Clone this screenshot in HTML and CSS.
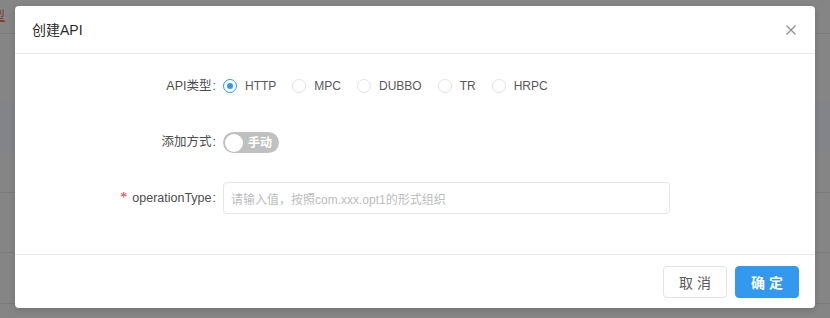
FILE: index.html
```html
<!DOCTYPE html>
<html lang="zh-CN">
<head>
<meta charset="utf-8">
<title>创建API</title>
<link rel="stylesheet" href="styles.css">
</head>
<body>
<div class="page">
  <div class="bg-row bg-top"><span class="bg-link">型</span></div>
  <div class="bg-row bg-gap1"></div>
  <div class="bg-row bg-band"></div>
  <div class="bg-row bg-r4"></div>
  <div class="bg-row bg-r5"></div>
  <div class="bg-row bg-r6"></div>
</div>

<div class="modal">
  <div class="modal-header">
    <div class="modal-title">创建API</div>
    <span class="modal-close">
      <svg width="10" height="10" viewBox="0 0 10 10"><path d="M0.5 0.5 L9.5 9.5 M9.5 0.5 L0.5 9.5" stroke="#8c8c8c" stroke-width="1.1" fill="none"/></svg>
    </span>
  </div>
  <div class="modal-body">
    <div class="form-row">
      <div class="form-label"><span class="label-text">API类型</span></div>
      <div class="radio-group">
        <label class="radio checked"><span class="radio-circle"></span><span class="radio-text">HTTP</span></label>
        <label class="radio"><span class="radio-circle"></span><span class="radio-text">MPC</span></label>
        <label class="radio"><span class="radio-circle"></span><span class="radio-text">DUBBO</span></label>
        <label class="radio"><span class="radio-circle"></span><span class="radio-text">TR</span></label>
        <label class="radio"><span class="radio-circle"></span><span class="radio-text">HRPC</span></label>
      </div>
    </div>
    <div class="form-row">
      <div class="form-label"><span class="label-text">添加方式</span></div>
      <div class="switch"><span class="switch-knob"></span><span class="switch-inner">手动</span></div>
    </div>
    <div class="form-row">
      <div class="form-label"><span class="required">*</span><span class="label-text">operationType</span></div>
      <div class="input"><span class="placeholder">请输入值，按照com.xxx.opt1的形式组织</span></div>
    </div>
  </div>
  <div class="modal-footer">
    <button class="btn">取 消</button>
    <button class="btn btn-primary">确 定</button>
  </div>
</div>
</body>
</html>
```

FILE: styles.css
```css
html, body {
  margin: 0;
  padding: 0;
}
body {
  width: 830px;
  height: 318px;
  overflow: hidden;
  background: #858585;
  font-family: "Liberation Sans", "Noto Sans CJK SC", sans-serif;
  font-size: 12px;
  position: relative;
}

.page {
  display: flex;
  flex-direction: column;
}
.bg-row {
  border-bottom: 1px solid #7b7b7b;
}
.bg-top {
  height: 33px;
  overflow: hidden;
}
.bg-link {
  display: block;
  margin-left: -8px;
  margin-top: 8px;
  font-size: 13px;
  line-height: 16px;
  color: #7d3f35;
  text-decoration: underline;
}
.bg-gap1 {
  height: 68px;
  border-bottom: none;
}
.bg-band {
  height: 50px;
  background: #828489;
  border-bottom: none;
}
.bg-r4 {
  height: 40px;
}
.bg-r5 {
  height: 59px;
}
.bg-r6 {
  height: 50px;
}

.modal {
  position: absolute;
  left: 15px;
  top: 6px;
  width: 800px;
  height: 302px;
  background: #fff;
  border-radius: 4px;
  box-shadow: 0 2px 6px rgba(0, 0, 0, 0.15);
  display: flex;
  flex-direction: column;
}

.modal-header {
  height: 47px;
  border-bottom: 1px solid #e9e9e9;
  display: flex;
  align-items: center;
  justify-content: space-between;
  padding: 0 19px 0 17px;
}
.modal-title {
  font-size: 14px;
  line-height: 22px;
  color: #2b2b2b;
}
.modal-close {
  display: flex;
  width: 10px;
  height: 10px;
}

.modal-body {
  height: 201px;
  box-sizing: border-box;
  padding-top: 16px;
  border-bottom: 1px solid #e9e9e9;
}

.form-row {
  height: 32px;
  margin-bottom: 24px;
  display: flex;
  align-items: center;
}
.form-label {
  width: 208px;
  flex: none;
  display: flex;
  justify-content: flex-end;
  align-items: center;
  color: #4d4d4d;
  font-size: 12.5px;
  line-height: 20px;
}
.label-text::after {
  content: ":";
  margin: 0 7px 0 1px;
}
.required {
  color: #f5222d;
  font-family: "Liberation Serif", serif;
  font-size: 14px;
  margin-right: 5px;
}

.radio-group {
  display: flex;
  align-items: center;
}
.radio {
  display: flex;
  align-items: center;
  margin-right: 16px;
}
.radio-circle {
  width: 14px;
  height: 14px;
  box-sizing: border-box;
  border: 1px solid #e3e3e3;
  border-radius: 50%;
  display: flex;
  align-items: center;
  justify-content: center;
}
.radio.checked .radio-circle {
  border-color: #3399ee;
}
.radio.checked .radio-circle::after {
  content: "";
  width: 6px;
  height: 6px;
  border-radius: 50%;
  background: #3399ee;
}
.radio-text {
  margin-left: 8px;
  color: #595959;
  font-size: 12px;
  line-height: 20px;
}

.switch {
  width: 56px;
  height: 21px;
  border-radius: 11px;
  background: #c0c0c0;
  display: flex;
  align-items: center;
  box-sizing: border-box;
  padding-left: 2px;
  margin-top: 1px;
}
.switch-knob {
  width: 18px;
  height: 18px;
  border-radius: 50%;
  background: #fff;
  flex: none;
}
.switch-inner {
  margin-left: 5px;
  color: #fff;
  font-size: 12px;
  line-height: 18px;
  font-weight: 700;
}

.input {
  width: 447px;
  height: 32px;
  box-sizing: border-box;
  border: 1px solid #e6e6e6;
  border-radius: 4px;
  display: flex;
  align-items: center;
  padding: 0 7px;
}
.placeholder {
  color: #bdbdbd;
  font-size: 12px;
}

.modal-footer {
  flex: 1;
  display: flex;
  justify-content: flex-end;
  align-items: center;
  padding: 0 16px;
  gap: 8px;
}
.btn {
  width: 64px;
  height: 32px;
  border-radius: 4px;
  border: 1px solid #e3e3e3;
  background: #fff;
  color: #595959;
  font-family: "Liberation Sans", "Noto Sans CJK SC", sans-serif;
  font-size: 14px;
  padding: 0;
}
.btn-primary {
  background: #3399ee;
  border-color: #3399ee;
  color: #fff;
  font-weight: 700;
}
```
